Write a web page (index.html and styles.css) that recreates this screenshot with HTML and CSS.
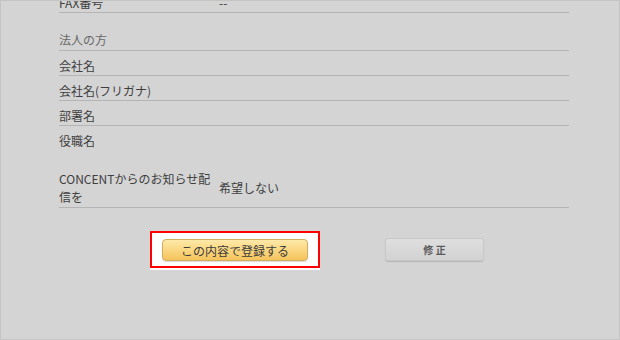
FILE: index.html
```html
<!DOCTYPE html>
<html>
  <head>
    <meta charset="UTF-8" />
    <title>登録内容の確認</title>
    <link rel="stylesheet" href="styles.css">
  </head>

  <body>
    <div class="frame">
      <div class="confirm">
        <div class="row">
          <div class="label">FAX番号</div>
          <div class="value">--</div>
        </div>

        <div class="row heading">
          <div class="label">法人の方</div>
        </div>
        <div class="row">
          <div class="label">会社名</div>
          <div class="value"></div>
        </div>
        <div class="row">
          <div class="label">会社名(フリガナ)</div>
          <div class="value"></div>
        </div>
        <div class="row">
          <div class="label">部署名</div>
          <div class="value"></div>
        </div>
        <div class="row no-line">
          <div class="label">役職名</div>
          <div class="value"></div>
        </div>

        <div class="row notice">
          <div class="label">CONCENTからのお知らせ配信を</div>
          <div class="value">希望しない</div>
        </div>

        <div class="actions">
          <div class="highlight">
            <button class="btn-submit">この内容で登録する</button>
          </div>
          <button class="btn-edit">修 正</button>
        </div>
      </div>
    </div>
  </body>
</html>
```

FILE: styles.css
```css
html,
body {
  margin: 0;
  padding: 0;
}

body {
  font-family: "Noto Sans CJK JP", "Noto Sans", sans-serif;
  font-size: 12px;
  color: #3e3e3e;
  background: #d4d4d4;
}

.frame {
  box-sizing: border-box;
  width: 620px;
  height: 340px;
  border: 1px solid #c4c4c4;
  overflow: hidden;
}

.confirm {
  width: 510px;
  margin: -13px 0 0 58px;
}

.row {
  display: flex;
  align-items: flex-end;
  height: 24px;
  line-height: 18px;
  border-bottom: 1px solid #b4b4b4;
}

.row .label {
  width: 160px;
  flex-shrink: 0;
}

.row .value {
  flex: 1;
}

.row.heading {
  height: 38px;
  padding-bottom: 1px;
  box-sizing: border-box;
  color: #686868;
}

.row.no-line {
  border-bottom: none;
}

.row.notice {
  height: auto;
  align-items: center;
  padding: 20px 0 1px;
}

.row.notice .label {
  width: 156px;
  margin-right: 4px;
}

.actions {
  display: flex;
  align-items: center;
  margin-top: 23px;
  padding-left: 91px;
}

.highlight {
  box-sizing: border-box;
  width: 170px;
  height: 37px;
  padding: 6px 0 0 10px;
  border: 2px solid #f00;
  background: #fff;
  box-shadow: 0 2px 0 #fff;
}

.btn-submit {
  display: block;
  width: 146px;
  height: 22px;
  padding: 0;
  border: 1px solid #d2ad5e;
  border-radius: 4px;
  background: linear-gradient(#fde9a8, #f9d37a 60%, #f4c35c);
  box-shadow: 0 1px 1px rgba(0, 0, 0, 0.15);
  font-family: inherit;
  font-size: 12px;
  color: #3a3a3a;
  cursor: pointer;
}

.btn-edit {
  width: 99px;
  height: 23px;
  margin-left: 65px;
  padding: 0;
  border: 1px solid #c8c8c8;
  border-radius: 3px;
  background: linear-gradient(#dedede, #d2d2d2);
  box-shadow: 0 1px 1px rgba(0, 0, 0, 0.15);
  font-family: inherit;
  font-size: 10px;
  font-weight: bold;
  color: #5a5a5a;
  cursor: pointer;
}
```
